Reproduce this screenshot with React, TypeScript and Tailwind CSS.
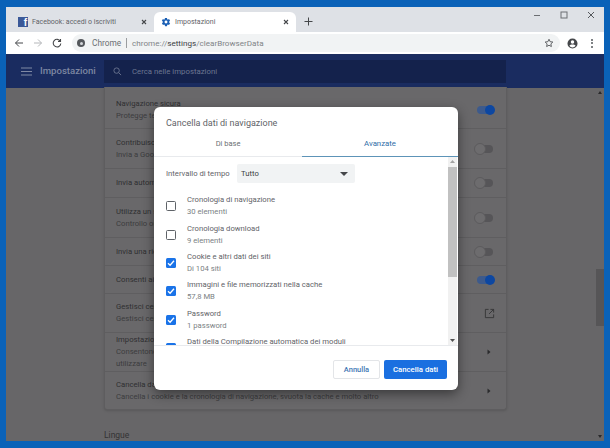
import React from "react";

const Toggle = ({ on }: { on?: boolean }) =>
  on ? (
    <div className="relative w-[17px] h-[8px] rounded-full bg-[#3d5a8c] mr-[2px]">
      <div className="absolute right-[-1px] top-[-1px] w-[10px] h-[10px] rounded-full bg-[#0d47a1]" />
    </div>
  ) : (
    <div className="relative w-[17px] h-[8px] rounded-full bg-[#565558] mr-[3px]">
      <div className="absolute left-[-2px] top-[-2px] w-[12px] h-[12px] rounded-full bg-[#6d6c6e] border border-[#5c5b5d]" />
    </div>
  );

const Caret = () => (
  <svg width="4" height="6" viewBox="0 0 4 6" className="mr-[5px]">
    <path d="M0.5 0.5L3.5 3L0.5 5.5Z" fill="#2a2a2c" />
  </svg>
);

const rows: { h: string; a: string; b?: string; c?: string; r: React.ReactNode }[] = [
  { h: "h-[41px] pt-[5px]", a: "Navigazione sicura", b: "Protegge te e il tuo dispositivo", r: <Toggle on /> },
  { h: "h-[40px]", a: "Contribuisci a migliorare", b: "Invia a Google alcune informazioni", r: <Toggle /> },
  { h: "h-[29px]", a: "Invia automaticamente", r: <Toggle /> },
  { h: "h-[40px]", a: "Utilizza un servizio", b: "Controllo ortografico", r: <Toggle /> },
  { h: "h-[28px]", a: "Invia una richiesta", r: <Toggle /> },
  { h: "h-[28px]", a: "Consenti ai siti", r: <Toggle on /> },
  {
    h: "h-[39px]",
    a: "Gestisci certificati",
    b: "Gestisci certificati e impostazioni",
    r: (
      <svg width="11" height="11" viewBox="0 0 12 12" fill="none" stroke="#353537" strokeWidth="1" className="mr-[1px]">
        <path d="M5 1.5H1.5V10.5H10.5V7M7 1.5H10.5V5M10.5 1.5L5.5 6.5" />
      </svg>
    ),
  },
  { h: "h-[39px]", a: "Impostazioni contenuti", b: "Consentono di controllare", c: "utilizzare", r: <Caret /> },
  { h: "h-[38px]", a: "Cancella dati di navigazione", b: "Cancella i cookie e la cronologia di navigazione, svuota la cache e molto altro", r: <Caret /> },
];

const items: [string, string, boolean][] = [
  ["Cronologia di navigazione", "30 elementi", false],
  ["Cronologia download", "9 elementi", false],
  ["Cookie e altri dati dei siti", "Di 104 siti", true],
  ["Immagini e file memorizzati nella cache", "57,8 MB", true],
  ["Password", "1 password", true],
  ["Dati della Compilazione automatica dei moduli", "", true],
];

const Check = ({ on }: { on: boolean }) =>
  on ? (
    <div className="w-[10px] h-[10px] shrink-0 rounded-[1.5px] bg-[#1a73e8] flex items-center justify-center">
      <svg width="8" height="8" viewBox="0 0 8 8" fill="none" stroke="#fff" strokeWidth="1.3">
        <path d="M1 4.2L3.1 6.2L7 1.8" />
      </svg>
    </div>
  ) : (
    <div className="w-[10px] h-[10px] shrink-0 rounded-[1.5px] border-[1.3px] border-[#5f6368] bg-white" />
  );

export default function App() {
  return (
    <div className="relative w-[610px] h-[448px] overflow-hidden bg-[#0a62b8] pt-[7px] pl-[6px] font-['Roboto',sans-serif]">
      <div className="relative w-[598px] h-[434px] flex flex-col overflow-hidden">
        {/* Tab strip */}
        <div className="h-[25px] shrink-0 bg-[#dee1e6] flex items-end pl-[2px] relative">
          <div className="w-[146px] h-[20px] flex items-center pl-[10px] pr-[7px] gap-[4px]">
            <div className="w-[10px] h-[10px] bg-[#3b5998] relative overflow-hidden flex items-end justify-end">
              <span className="text-white font-bold text-[10px] leading-[9px] mr-[1px] font-['Liberation_Sans',sans-serif]">f</span>
            </div>
            <span className="text-[7px] text-[#5f6368] flex-1 whitespace-nowrap">Facebook: accedi o iscriviti</span>
            <svg width="6" height="6" viewBox="0 0 6 6" stroke="#45474a" strokeWidth="1.1"><path d="M1 1L5 5M5 1L1 5" /></svg>
          </div>
          <div className="w-[142px] h-[20px] bg-white rounded-t-[6px] flex items-center pl-[7px] pr-[7px] gap-[4px]">
            <svg width="10" height="10" viewBox="0 0 24 24" fill="#1a5fb4">
              <path d="M19.4 13c.1-.3.1-.7.1-1s0-.7-.1-1l2.100-1.600c.2-.2.2-.4.1-.6l-2-3.500c-.1-.2-.4-.3-.6-.2l-2.500 1c-.5-.4-1.100-.7-1.700-1l-.4-2.600c0-.2-.2-.4-.5-.4h-4c-.2 0-.4.2-.5.4l-.4 2.600c-.6.3-1.200.6-1.700 1l-2.500-1c-.2-.1-.5 0-.6.2l-2 3.500c-.1.2-.1.5.1.6L4.500 11c-.1.3-.1.7-.1 1s0 .7.1 1l-2.100 1.600c-.2.2-.2.4-.1.6l2 3.500c.1.2.4.3.6.2l2.500-1c.5.4 1.100.7 1.700 1l.4 2.600c0 .2.2.4.5.4h4c.2 0 .4-.2.5-.4l.4-2.600c.6-.3 1.200-.6 1.700-1l2.500 1c.2.1.5 0 .6-.2l2-3.500c.1-.2.1-.5-.1-.6L19.400 13zM12 15.500a3.500 3.500 0 1 1 0-7 3.500 3.500 0 0 1 0 7z" />
            </svg>
            <span className="text-[7px] text-[#5f6368] flex-1 whitespace-nowrap">Impostazioni</span>
            <svg width="6" height="6" viewBox="0 0 6 6" stroke="#45474a" strokeWidth="1.1"><path d="M1 1L5 5M5 1L1 5" /></svg>
          </div>
          <svg width="9" height="9" viewBox="0 0 9 9" stroke="#45474a" strokeWidth="1" className="ml-[8px] mb-[6px]"><path d="M4.500 0.500V8.500M0.500 4.500H8.500" /></svg>
          <div className="absolute right-[9px] top-[4px] flex items-center gap-[19px]">
            <svg width="8" height="8" viewBox="0 0 8 8" stroke="#6b6e72"><path d="M1 4.500H7" /></svg>
            <svg width="8" height="8" viewBox="0 0 8 8" fill="none" stroke="#6b6e72"><rect x="1" y="1" width="6" height="6" /></svg>
            <svg width="8" height="8" viewBox="0 0 8 8" stroke="#55585c"><path d="M1 1L7 7M7 1L1 7" /></svg>
          </div>
        </div>
        {/* Toolbar */}
        <div className="h-[22px] shrink-0 bg-white flex items-center pl-[8px] pr-[11px]">
          <svg width="10" height="10" viewBox="0 0 10 10" fill="none" stroke="#45474a" strokeWidth="1"><path d="M9 5H1.500M5 1.500L1.500 5L5 8.500" /></svg>
          <svg width="10" height="10" viewBox="0 0 10 10" fill="none" stroke="#b5b7ba" strokeWidth="1" className="ml-[9px]"><path d="M1 5H8.500M5 1.500L8.500 5L5 8.500" /></svg>
          <svg width="10" height="10" viewBox="0 0 10 10" fill="none" stroke="#45474a" strokeWidth="1.100" className="ml-[9px]"><path d="M8.300 3.200A3.800 3.800 0 1 0 8.800 5.500M8.500 1V3.500H6" /></svg>
          <div className="ml-[10px] flex-1 h-[18px] rounded-full bg-[#f1f3f4] flex items-center pl-[5px]">
            <div className="w-[8px] h-[8px] rounded-full bg-[#55585c] flex items-center justify-center">
              <div className="w-[3px] h-[3px] rounded-full bg-[#d5d7da]" />
            </div>
            <span className="ml-[7px] text-[8.300px] text-[#6b6f73]">Chrome</span>
            <div className="w-px h-[10px] bg-[#9a9da0] mx-[5px]" />
            <span className="text-[8.100px] text-[#7f8387] whitespace-nowrap">
              chrome://<span className="text-[#3c4043]">settings</span>/clearBrowserData
            </span>
            <div className="flex-1" />
            <svg width="10" height="10" viewBox="0 0 24 24" fill="none" stroke="#45474a" strokeWidth="2" className="mr-[6px]"><path d="M12 3l2.800 5.900 6.400.8-4.700 4.400 1.200 6.400L12 17.400l-5.700 3.100 1.200-6.400L2.800 9.700l6.400-.8z" /></svg>
          </div>
          <svg width="11" height="11" viewBox="0 0 24 24" fill="#45474a" className="ml-[7px]"><path d="M12 1a11 11 0 1 0 0 22 11 11 0 0 0 0-22zm0 4a3.800 3.800 0 1 1 0 7.600A3.800 3.800 0 0 1 12 5zm0 15.500a8.600 8.600 0 0 1-6.800-3.400c1-2 4.300-3 6.800-3s5.800 1 6.800 3a8.600 8.600 0 0 1-6.800 3.400z" /></svg>
          <div className="ml-[13px] flex flex-col gap-[1.500px]">
            <div className="w-[2px] h-[2px] rounded-full bg-[#55585c]" />
            <div className="w-[2px] h-[2px] rounded-full bg-[#55585c]" />
            <div className="w-[2px] h-[2px] rounded-full bg-[#55585c]" />
          </div>
        </div>
        <div className="h-px shrink-0 bg-[#1c2d5e]" />
        {/* Header */}
        <div className="h-[33px] shrink-0 bg-[#1a2c60] flex items-center">
          <div className="w-[98px] flex items-center pl-[15px]">
            <svg width="11" height="9" viewBox="0 0 11 9" stroke="#7f89a3" strokeWidth="1.100"><path d="M0 1H11M0 4.500H11M0 8H11" /></svg>
            <span className="ml-[8px] text-[9.600px] font-medium text-[#7d87a2] whitespace-nowrap">Impostazioni</span>
          </div>
          <div className="w-[402px] h-[23px] bg-[#14224c] flex items-center pl-[9px]">
            <svg width="9" height="9" viewBox="0 0 10 10" fill="none" stroke="#6c7691" strokeWidth="1"><circle cx="4" cy="4" r="3" /><path d="M6.300 6.300L9 9" /></svg>
            <span className="ml-[10px] text-[7.800px] text-[#6c7691]">Cerca nelle impostazioni</span>
          </div>
        </div>
        {/* Page */}
        <div className="flex-1 bg-[#676668] relative min-h-0 pl-[98px]">
          <div className="w-[403px] h-[323px] mt-[-1px] border border-t-0 border-[#5e5d5f] rounded-b-[3px] shadow-sm bg-[#69686a]">
            {rows.map((r, i) => (
              <div key={i} className={`${r.h} flex items-center justify-between pl-[11px] pr-[10px] ${i ? "border-t border-[#5f5e60]" : ""}`}>
                <div className="text-[7.700px] leading-[12px] text-[#2f2f31] whitespace-nowrap">
                  <div>{r.a}</div>
                  {r.b && <div className="text-[#3c3c3e]">{r.b}</div>}
                  {r.c && <div className="text-[#3c3c3e]">{r.c}</div>}
                </div>
                {r.r}
              </div>
            ))}
          </div>
          <div className="mt-[19px] ml-0 text-[8.500px] leading-[12px] text-[#333335]">Lingue</div>
          {/* page scrollbar */}
          <div className="absolute right-0 top-0 bottom-0 w-[8px] flex flex-col items-center justify-between py-[3px]">
            <svg width="4" height="3" viewBox="0 0 4 3"><path d="M0 3H4L2 0Z" fill="#2a2a2c" /></svg>
            <svg width="4" height="3" viewBox="0 0 4 3"><path d="M0 0H4L2 3Z" fill="#2a2a2c" /></svg>
            <div className="absolute h-[57px] w-[8px] bg-[#565557]" style={{ top: 181 }} />
          </div>
          {/* Dialog */}
          <div className="absolute left-[148px] top-[19px] w-[304px] h-[283px] bg-white rounded-[6px] shadow-[0_4px_12px_rgba(0,0,0,0.45)] flex flex-col overflow-hidden">
            <div className="h-[30px] shrink-0 pl-[12px] pt-[10px] text-[9px] leading-[13px] text-[#5f6368] whitespace-nowrap">Cancella dati di navigazione</div>
            <div className="h-[20px] shrink-0 flex border-b border-[#e8eaed] relative">
              <div className="w-[148px] text-center text-[7.500px] leading-[14px] text-[#6b6f73]">Di base</div>
              <div className="flex-1 text-center text-[7.800px] leading-[14px] text-[#2f6ea8] border-b-[1.500px] border-[#5d94b8] h-[20px]">Avanzate</div>
            </div>
            <div className="h-[189px] shrink-0 flex overflow-hidden border-b border-[#e8eaed]">
              <div className="flex-1 pl-[12px] pt-[7px] overflow-hidden">
                <div className="flex items-center h-[19px]">
                  <span className="text-[7.700px] text-[#5f6368] whitespace-nowrap w-[71px]">Intervallo di tempo</span>
                  <div className="w-[118px] h-[19px] bg-[#f1f3f4] rounded-[2px] flex items-center justify-between pl-[4px] pr-[7px]">
                    <span className="text-[7.700px] text-[#3c4043]">Tutto</span>
                    <svg width="8" height="4" viewBox="0 0 8 4"><path d="M0 0H8L4 4Z" fill="#45474a" /></svg>
                  </div>
                </div>
                <div className="mt-[9px] flex flex-col">
                  {items.map(([a, b, on]) => (
                    <div key={a} className="h-[28.400px] flex items-center shrink-0">
                      <Check on={on} />
                      <div className="ml-[11px] text-[7.700px] leading-[12px] whitespace-nowrap">
                        <div className="text-[#5f6368]">{a}</div>
                        <div className="text-[#7b7f84]">{b || "\u00a0"}</div>
                      </div>
                    </div>
                  ))}
                </div>
              </div>
              <div className="w-[9px] shrink-0 bg-[#f1f1f1] flex flex-col items-center mr-[1px]">
                <svg width="5" height="3" viewBox="0 0 5 3" className="mt-[3px]"><path d="M0 3H5L2.500 0Z" fill="#a3a3a3" /></svg>
                <div className="w-full h-[110px] bg-[#c1c1c1] mt-[4px]" />
                <div className="flex-1" />
                <svg width="5" height="3" viewBox="0 0 5 3" className="mb-[3px]"><path d="M0 0H5L2.500 3Z" fill="#505050" /></svg>
              </div>
            </div>
            <div className="flex-1 flex justify-end items-start gap-[4px] pt-[14px] pr-[11px]">
              <div className="w-[47px] h-[19px] rounded-[2px] border border-[#e3e5e8] flex items-center justify-center text-[7.500px] font-medium text-[#3f78b5]">Annulla</div>
              <div className="w-[63px] h-[19px] rounded-[2px] bg-[#1a6fe0] flex items-center justify-center text-[7.800px] font-medium text-white whitespace-nowrap">Cancella dati</div>
            </div>
          </div>
        </div>
      </div>
    </div>
  );
}
